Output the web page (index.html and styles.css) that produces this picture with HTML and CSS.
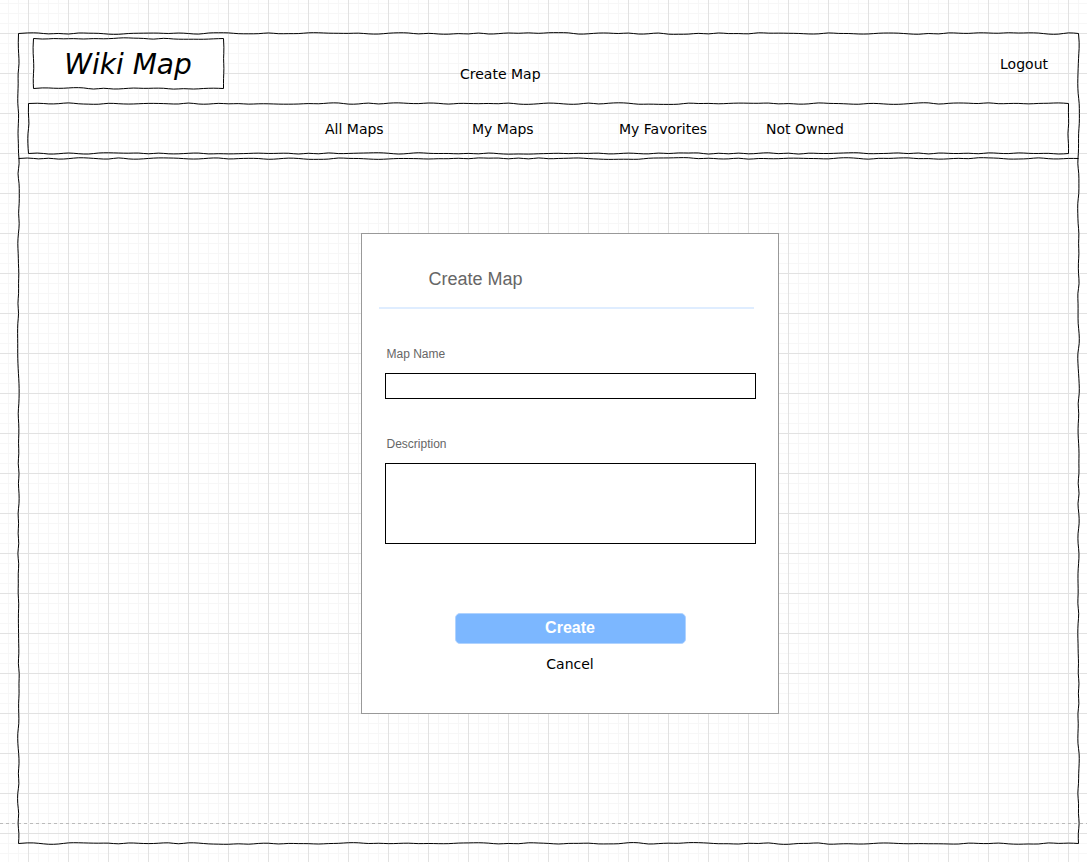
FILE: index.html
```html
<!DOCTYPE html>
<html lang="en">
<head>
  <meta charset="utf-8">
  <meta name="viewport" content="width=device-width, initial-scale=1">
  <title>Wiki Map - Create Map</title>
  <link rel="stylesheet" href="styles.css">
</head>
<body>
  <div class="frame sketch">
    <header class="header sketch" data-edges="bottom">
      <div class="topbar">
        <div class="logo sketch">Wiki Map</div>
        <a class="topbar-create" href="#create">Create Map</a>
        <a class="topbar-logout" href="#logout">Logout</a>
      </div>
      <nav class="nav sketch">
        <a href="#all">All Maps</a>
        <a href="#mine">My Maps</a>
        <a href="#favorites">My Favorites</a>
        <a href="#not-owned">Not Owned</a>
      </nav>
    </header>
    <main class="main">
      <form class="dialog" id="create">
        <h1 class="dialog-title">Create Map</h1>
        <div class="fields">
          <label class="label" for="map-name">Map Name</label>
          <input class="field" id="map-name" type="text">
          <label class="label" for="description">Description</label>
          <textarea class="field field-tall" id="description"></textarea>
        </div>
        <div class="actions">
          <button class="submit" type="button">Create</button>
          <a class="cancel" href="#cancel">Cancel</a>
        </div>
      </form>
    </main>
  </div>
  <script src="sketch.js"></script>
</body>
</html>
```
FILE: styles.css
```css
* {
  box-sizing: border-box;
}

body {
  margin: 0;
  min-height: 100vh;
  padding: 33px 9px 18px 18px;
  font: 14px/20px "DejaVu Sans", Verdana, sans-serif;
  color: #000;
  background-color: #fff;
  background-image:
    repeating-linear-gradient(90deg, #bbb 0 3px, #f4f4f4 3px 6px),
    linear-gradient(90deg, #e2e2e2 1px, transparent 1px),
    linear-gradient(#e2e2e2 1px, transparent 1px),
    linear-gradient(90deg, #f7f7f7 1px, transparent 1px),
    linear-gradient(#f7f7f7 1px, transparent 1px);
  background-size: 100% 1px, 40px 40px, 40px 40px, 10px 10px, 10px 10px;
  background-position: 0 823px, 28px 33px, 28px 33px, 8px 3px, 8px 3px;
  background-repeat: no-repeat, repeat, repeat, repeat, repeat;
}

a {
  color: inherit;
  text-decoration: none;
}

.sketch {
  position: relative;
}

.sketch-outline {
  position: absolute;
  inset: 0;
  width: 100%;
  height: 100%;
  overflow: visible;
  pointer-events: none;
  fill: none;
  stroke: #000;
  stroke-width: 1;
}

.header {
  padding: 5px 10px;
}

.topbar {
  display: flex;
  align-items: center;
  padding: 0 20px 0 5px;
}

.logo {
  width: 190px;
  height: 50px;
  font-size: 28px;
  font-style: italic;
  line-height: 53px;
  text-align: center;
  background: #fff;
}

.topbar-create {
  margin-left: 237px;
  padding-top: 22px;
}

.topbar-logout {
  margin-left: auto;
  padding-top: 2px;
}

.nav {
  display: grid;
  grid-template-columns: repeat(4, 147px);
  height: 50px;
  margin-top: 15px;
  padding-left: 297px;
  line-height: 52px;
}

.main {
  padding: 75px 0 129px 43px;
}

.dialog {
  width: 418px;
  margin: 0 auto;
  padding: 35px 22px 39px 23px;
  border: 1px solid #999;
  background: #fff;
  font-family: "Liberation Sans", Arial, sans-serif;
}

.dialog-title {
  margin: 0 0 0 -6px;
  padding: 0 50px 17px;
  width: 375px;
  border-bottom: 2px solid #dfedff;
  color: #666;
  font-size: 18px;
  font-weight: 400;
  line-height: 21px;
}

.fields {
  display: flex;
  flex-direction: column;
}

.label {
  margin-top: 35px;
  padding: 0 2px 9px;
  color: #666;
  font-size: 12px;
  line-height: 20px;
}

.field {
  display: block;
  width: 100%;
  height: 26px;
  padding: 2px 6px;
  border: 1px solid #000;
  border-radius: 0;
  background: #fff;
  font: inherit;
  resize: none;
}

.field-tall {
  height: 81px;
}

.actions {
  display: flex;
  flex-direction: column;
  align-items: center;
  gap: 10px;
  margin-top: 69px;
}

.submit {
  width: 231px;
  height: 31px;
  padding: 0 0 2px;
  border: 1px solid #b0d3ff;
  border-radius: 5px;
  background: #7cb7ff;
  color: #fff;
  font: bold 16px/20px "Liberation Sans", Arial, sans-serif;
}

.cancel {
  font-family: "DejaVu Sans", Verdana, sans-serif;
}
```
FILE: sketch.js
```js
// Draws a hand-drawn outline round every .sketch element.
const SVG_NS = "http://www.w3.org/2000/svg";

function makeRandom(seed) {
  let state = seed;
  return () => {
    state = (state * 16807) % 2147483647;
    return state / 2147483647;
  };
}

// One edge: straight overall, with a small sideways wobble every 10px.
function edge(x1, y1, x2, y2, random) {
  const length = Math.hypot(x2 - x1, y2 - y1);
  const steps = Math.max(1, Math.round(length / 10));
  const horizontal = y1 === y2;
  const points = [[x1, y1]];
  for (let i = 1; i < steps; i++) {
    const t = i / steps;
    const offset = (random() - 0.5) * 2;
    points.push([
      x1 + (x2 - x1) * t + (horizontal ? 0 : offset),
      y1 + (y2 - y1) * t + (horizontal ? offset : 0)
    ]);
  }
  points.push([x2, y2]);
  let d = `M${x1} ${y1}`;
  for (let i = 1; i < points.length - 1; i++) {
    const [cx, cy] = points[i];
    const [nx, ny] = points[i + 1];
    d += `Q${cx} ${cy} ${(cx + nx) / 2} ${(cy + ny) / 2}`;
  }
  return d + `L${x2} ${y2}`;
}

function outline(element, seed) {
  let svg = element.querySelector(":scope > .sketch-outline");
  if (!svg) {
    svg = document.createElementNS(SVG_NS, "svg");
    svg.setAttribute("class", "sketch-outline");
    svg.setAttribute("aria-hidden", "true");
    svg.appendChild(document.createElementNS(SVG_NS, "path"));
    element.appendChild(svg);
  }
  const random = makeRandom(seed);
  const l = 0.5, t = 0.5;
  const r = element.offsetWidth + 0.5, b = element.offsetHeight + 0.5;
  let d = edge(l, b, r, b, random);
  if (element.dataset.edges !== "bottom") {
    d += edge(l, t, r, t, random) + edge(r, t, r, b, random) + edge(l, t, l, b, random);
  }
  svg.firstChild.setAttribute("d", d);
}

function drawAll() {
  document.querySelectorAll(".sketch").forEach((el, i) => outline(el, 4321 + i * 977));
}

drawAll();
window.addEventListener("resize", drawAll);
```
